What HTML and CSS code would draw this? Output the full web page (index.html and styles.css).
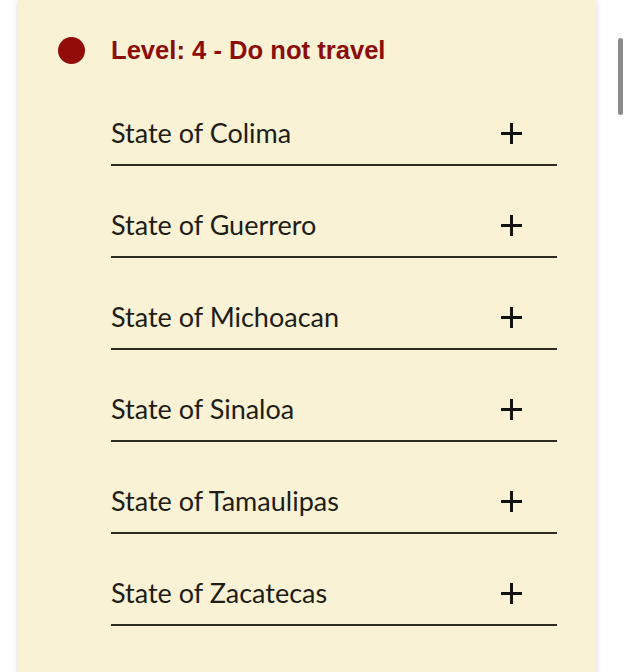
FILE: index.html
```html
<!DOCTYPE html>
<html lang="en">
<head>
<meta charset="utf-8">
<title>Travel advisory</title>
<link rel="stylesheet" href="styles.css">
</head>
<body>
<div class="card">
  <div class="level">
    <span class="dot"></span>
    <h2 class="level-title">Level: 4 - Do not travel</h2>
  </div>
  <ul class="states">
    <li class="state"><span class="state-name">State of Colima</span><svg class="plus" viewBox="0 0 20 20"><path d="M10 0V20M0 10H20"/></svg></li>
    <li class="state"><span class="state-name">State of Guerrero</span><svg class="plus" viewBox="0 0 20 20"><path d="M10 0V20M0 10H20"/></svg></li>
    <li class="state"><span class="state-name">State of Michoacan</span><svg class="plus" viewBox="0 0 20 20"><path d="M10 0V20M0 10H20"/></svg></li>
    <li class="state"><span class="state-name">State of Sinaloa</span><svg class="plus" viewBox="0 0 20 20"><path d="M10 0V20M0 10H20"/></svg></li>
    <li class="state"><span class="state-name">State of Tamaulipas</span><svg class="plus" viewBox="0 0 20 20"><path d="M10 0V20M0 10H20"/></svg></li>
    <li class="state"><span class="state-name">State of Zacatecas</span><svg class="plus" viewBox="0 0 20 20"><path d="M10 0V20M0 10H20"/></svg></li>
  </ul>
</div>
<div class="scrollbar"></div>
</body>
</html>
```
FILE: styles.css
```css
html, body {
  margin: 0;
  padding: 0;
  background: #ffffff;
}
body {
  height: 672px;
  overflow: hidden;
}
.card {
  margin-left: 18px;
  width: 578px;
  min-height: 700px;
  background: #f9f2d4;
  box-shadow: 0 0 6px rgba(0, 0, 0, 0.16);
  padding-top: 35px;
  box-sizing: border-box;
}
.level {
  display: flex;
  align-items: center;
  height: 30px;
  padding-left: 40px;
}
.dot {
  width: 27px;
  height: 27px;
  border-radius: 50%;
  background: #920d0a;
  flex: none;
  margin-right: 26px;
}
.level-title {
  margin: 0;
  font-family: "Liberation Sans", Arial, sans-serif;
  font-weight: bold;
  font-size: 25.6px;
  line-height: 30px;
  color: #8b0e0b;
}
.states {
  list-style: none;
  margin: 9px 0 0 93px;
  padding: 0;
  width: 446px;
}
.state {
  display: flex;
  align-items: center;
  justify-content: space-between;
  padding: 41px 0 13px;
  line-height: 36px;
  border-bottom: 2px solid #2e2b1e;
}
.state-name {
  font-family: Lato, "Noto Sans", sans-serif;
  font-size: 27px;
  color: #1e1d17;
}
.plus {
  width: 21px;
  height: 21px;
  margin-right: 35px;
  fill: none;
  stroke: #111111;
  stroke-width: 2.8;
}
.scrollbar {
  position: fixed;
  left: 618px;
  top: 38px;
  width: 5px;
  height: 77px;
  border-radius: 3px;
  background: #8a8a8a;
}
```
